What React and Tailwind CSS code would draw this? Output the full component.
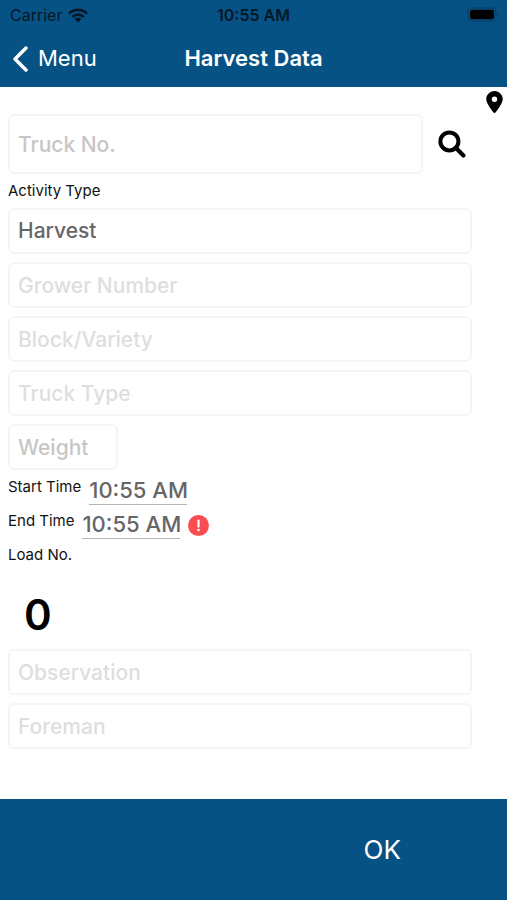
import { FaLocationDot } from "react-icons/fa6";

const fieldBase =
  "block w-full rounded-md border-2 border-[#f5f5f5] bg-white px-2 text-[21px] font-medium outline-none";

function Field({ name, tall, tone = "placeholder:text-[#dedede]" }) {
  return (
    <input
      type="text"
      aria-label={name}
      placeholder={name}
      className={`${fieldBase} ${tall ? "h-[60px]" : "h-[46px]"} text-[#666666] placeholder:opacity-100 ${tone}`}
    />
  );
}

function TimeRow({ id, label, children }) {
  return (
    <div className="flex h-[34px] items-start gap-2">
      <label htmlFor={id} className="text-[15px] leading-5">
        {label}
      </label>
      <input
        id={id}
        type="text"
        defaultValue="10:55 AM"
        className="h-[28px] w-[98px] border-b border-[#b5b5b5] bg-transparent text-center text-[22px] font-medium text-[#666666] outline-none"
      />
      {children}
    </div>
  );
}

function WifiIcon() {
  return (
    <svg viewBox="0 0 20 15" className="h-[15px] w-5" aria-hidden="true">
      <g fill="none" stroke="#041826" strokeWidth="2.6">
        <path d="M1 5.6 A12.8 12.8 0 0 1 19 5.6" />
        <path d="M4.3 9 A8.1 8.1 0 0 1 15.7 9" />
      </g>
      <path d="M6.7 11.1 A4.7 4.7 0 0 1 13.3 11.1 L10 14.4 Z" fill="#041826" />
    </svg>
  );
}

function BatteryIcon() {
  return (
    <svg viewBox="0 0 34 16" className="h-4 w-[34px]" aria-hidden="true">
      <rect x="1" y="1" width="28" height="13" rx="4" fill="none" stroke="#06436b" strokeWidth="1.5" />
      <rect x="3" y="2.8" width="24" height="9.5" rx="2.5" fill="#000" />
      <path d="M31 5.5 Q33 7.5 31 9.5 Z" fill="#06436b" />
    </svg>
  );
}

function SearchIcon() {
  return (
    <svg viewBox="0 0 28 28" className="size-7" fill="none" stroke="#000" aria-hidden="true">
      <circle cx="11.4" cy="11.4" r="9" strokeWidth="4" />
      <path d="M18.5 18.5 L25.4 25.4" strokeWidth="4.2" strokeLinecap="round" />
    </svg>
  );
}

export default function App() {
  return (
    <div className="flex min-h-screen flex-col bg-white font-['Inter',sans-serif] text-[#111111]">
      <header className="bg-[#075284]">
        <div className="grid h-[30px] grid-cols-3 items-center px-1.5 text-[#041826]">
          <div className="flex items-center gap-1.5 pl-1">
            <span className="text-base">Carrier</span>
            <WifiIcon />
          </div>
          <span className="text-center text-base font-semibold">10:55 AM</span>
          <div className="flex justify-end">
            <BatteryIcon />
          </div>
        </div>
        <div className="grid h-[57px] grid-cols-3 items-center px-3 text-white">
          <button type="button" className="flex items-center gap-2.5 text-[22px]">
            <svg viewBox="0 0 16 26" className="h-[26px] w-4" aria-hidden="true">
              <path d="M14 2 L3 13 L14 24" fill="none" stroke="#fff" strokeWidth="3.4" strokeLinecap="round" strokeLinejoin="round" />
            </svg>
            Menu
          </button>
          <h1 className="whitespace-nowrap text-center text-[22px] font-semibold">Harvest Data</h1>
        </div>
      </header>

      <main className="flex-1 pl-2">
        <div className="flex h-[27px] items-end justify-end pr-1 pb-px">
          <button type="button" aria-label="Location">
            <FaLocationDot className="h-[22px] w-[17px] text-black" />
          </button>
        </div>

        <div className="flex items-center gap-[15px] pr-[41px]">
          <Field name="Truck No." tall tone="placeholder:text-[#c6c6c6]" />
          <button type="button" aria-label="Search" className="shrink-0">
            <SearchIcon />
          </button>
        </div>

        <div className="pr-[35px]">
          <label htmlFor="activity" className="flex h-[34px] items-center text-[15px]">
            Activity Type
          </label>
          <div className="flex flex-col gap-2">
            <select id="activity" className={`${fieldBase} h-[46px] appearance-none text-[#666666]`}>
              <option>Harvest</option>
            </select>
            <Field name="Grower Number" />
            <Field name="Block/Variety" />
            <Field name="Truck Type" />
            <div className="w-[110px]">
              <Field name="Weight" tone="placeholder:text-[#c6c6c6]" />
            </div>
          </div>

          <div className="pt-[7px]">
            <TimeRow id="start" label="Start Time" />
            <TimeRow id="end" label="End Time">
              <span role="img" aria-label="Error" className="mt-1 flex">
                <svg viewBox="0 0 22 22" className="size-[22px]" aria-hidden="true">
                  <circle cx="10.5" cy="10.5" r="10.5" fill="#fb4c50" />
                  <path d="M10.5 5.6 V11.6" stroke="#fff" strokeWidth="2.2" strokeLinecap="round" />
                  <circle cx="10.5" cy="15" r="1.3" fill="#fff" />
                </svg>
              </span>
            </TimeRow>
          </div>

          <div className="text-[15px] leading-5">Load No.</div>
          <div className="flex h-[84px] items-end pb-1 pl-4 text-[42px] leading-[60px] font-semibold text-black">0</div>

          <div className="flex flex-col gap-2">
            <Field name="Observation" />
            <Field name="Foreman" />
          </div>
        </div>
      </main>

      <footer className="grid h-[101px] grid-cols-2 bg-[#075284] text-white">
        <button type="button" className="col-start-2 pl-1 text-[26px]">
          OK
        </button>
      </footer>
    </div>
  );
}
